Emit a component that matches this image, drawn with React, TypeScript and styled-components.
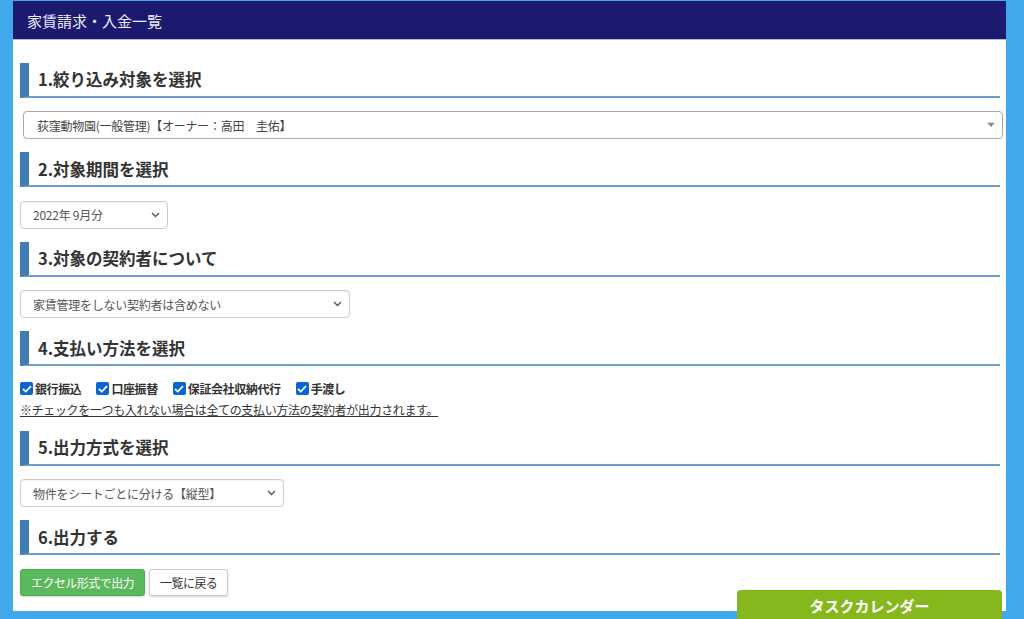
import styled, { createGlobalStyle } from "styled-components";

const GlobalStyle = createGlobalStyle`
  html, body {
    margin: 0;
    padding: 0;
    background: #3fa9ec;
    height: 100%;
    overflow: hidden;
  }
  body {
    font-family: "Noto Sans CJK JP", "Noto Sans", "Liberation Sans", sans-serif;
    color: #333;
  }
`;

const Page = styled.div`
  padding-top: 1px;
  padding-left: 13px;
  height: 619px;
  box-sizing: border-box;
`;

const Panel = styled.div`
  width: 993px;
  height: 610px;
  background: #fff;
  box-sizing: border-box;
`;

const Header = styled.div`
  height: 39px;
  background: #1b1a6e;
  display: flex;
  align-items: center;
  padding-left: 14px;
  color: #eceaf6;
  font-size: 15px;
  border-bottom: 1px solid #b9b8d8;
  box-sizing: border-box;
`;

const Body = styled.div`
  padding: 22.5px 6px 0 7px;
`;

const Section = styled.section`
  padding-bottom: 13px;
`;

const Heading = styled.h2`
  margin: 0;
  height: 35px;
  box-sizing: border-box;
  border-left: 9px solid #3f7db3;
  border-bottom: 2px solid #6f9ec9;
  padding-left: 9px;
  display: flex;
  align-items: center;
  font-size: 16.5px;
  font-weight: 700;
  color: #333;
`;

const Content = styled.div<{ $inset?: number }>`
  margin-top: 13.5px;
  padding-left: ${(p) => p.$inset ?? 0}px;
  margin-right: ${(p) => -(p.$inset ?? 0)}px;
`;

const SelectWrap = styled.div<{ $width: number | string }>`
  position: relative;
  width: ${(p) => (typeof p.$width === "number" ? `${p.$width}px` : p.$width)};
`;

const Select = styled.select<{ $plain?: boolean }>`
  appearance: none;
  width: 100%;
  height: 28px;
  box-sizing: border-box;
  border: 1px solid ${(p) => (p.$plain ? "#aaa" : "#ccc")};
  border-radius: 4px;
  background: #fff;
  padding: 0 24px 0 ${(p) => (p.$plain ? 13 : 12)}px;
  font-family: inherit;
  font-size: 12px;
  letter-spacing: -0.25px;
  color: ${(p) => (p.$plain ? "#444" : "#555")};
  box-shadow: ${(p) => (p.$plain ? "none" : "inset 0 1px 1px rgba(0,0,0,0.05)")};
  outline: none;
`;

const Arrow = styled.span`
  position: absolute;
  right: 8px;
  top: 50%;
  transform: translateY(-50%);
  display: flex;
  pointer-events: none;
`;

const Chevron = () => (
  <Arrow>
    <svg width="9" height="6" viewBox="0 0 9 6">
      <path d="M1 1 L4.5 4.5 L8 1" fill="none" stroke="#555" strokeWidth="1.4" />
    </svg>
  </Arrow>
);

const Triangle = () => (
  <Arrow>
    <svg width="8" height="5" viewBox="0 0 8 5">
      <path d="M0 0 H8 L4 4.5 Z" fill="#888" />
    </svg>
  </Arrow>
);

const CheckRow = styled.div`
  display: flex;
  gap: 15px;
  height: 20px;
  align-items: center;
  margin-top: -1px;
`;

const CheckLabel = styled.label`
  display: flex;
  align-items: center;
  gap: 2px;
  font-size: 12px;
  letter-spacing: -0.4px;
  font-weight: 700;
  color: #333;
`;

const Box = styled.span`
  width: 13px;
  height: 13px;
  border-radius: 2px;
  background: #0b64d4;
  display: flex;
  align-items: center;
  justify-content: center;
`;

const Note = styled.div`
  font-size: 12px;
  letter-spacing: -0.35px;
  line-height: 22px;
  color: #333;
  text-decoration: underline;
  margin-bottom: -3px;
`;

const Buttons = styled.div`
  display: flex;
  gap: 4px;
`;

const Button = styled.button<{ $primary?: boolean }>`
  height: 27px;
  padding: 0 10px;
  border-radius: 3px;
  font-family: inherit;
  font-size: 12px;
  letter-spacing: -0.55px;
  cursor: pointer;
  border: 1px solid ${(p) => (p.$primary ? "#4cae4c" : "#ccc")};
  background: ${(p) => (p.$primary ? "#5cb85c" : "#fff")};
  color: ${(p) => (p.$primary ? "#fff" : "#333")};
  box-shadow: 0 1px 2px rgba(0, 0, 0, 0.18);
`;

const TaskTab = styled.div`
  position: fixed;
  left: 737px;
  bottom: 0;
  width: 265px;
  height: 29px;
  background: #86b81e;
  border-radius: 4px 4px 0 0;
  color: #fff;
  font-weight: 700;
  font-size: 15px;
  display: flex;
  justify-content: center;
  padding-top: 5px;
  box-sizing: border-box;
`;

const methods = ["銀行振込", "口座振替", "保証会社収納代行", "手渡し"];

const Check = ({ label }: { label: string }) => (
  <CheckLabel>
    <Box>
      <svg width="10" height="8" viewBox="0 0 10 8">
        <path d="M1 4 L3.8 6.6 L9 1.2" fill="none" stroke="#fff" strokeWidth="1.8" />
      </svg>
    </Box>
    {label}
  </CheckLabel>
);

export default function App() {
  return (
    <>
      <GlobalStyle />
      <Page>
        <Panel>
          <Header>家賃請求・入金一覧</Header>
          <Body>
            <Section>
              <Heading>1.絞り込み対象を選択</Heading>
              <Content $inset={3}>
                <SelectWrap $width="100%">
                  <Select $plain defaultValue="a">
                    <option value="a">荻窪動物園(一般管理)【オーナー：高田　圭佑】</option>
                  </Select>
                  <Triangle />
                </SelectWrap>
              </Content>
            </Section>
            <Section>
              <Heading>2.対象期間を選択</Heading>
              <Content>
                <SelectWrap $width={148}>
                  <Select defaultValue="a">
                    <option value="a">2022年 9月分</option>
                  </Select>
                  <Chevron />
                </SelectWrap>
              </Content>
            </Section>
            <Section>
              <Heading>3.対象の契約者について</Heading>
              <Content>
                <SelectWrap $width={330}>
                  <Select defaultValue="a">
                    <option value="a">家賃管理をしない契約者は含めない</option>
                  </Select>
                  <Chevron />
                </SelectWrap>
              </Content>
            </Section>
            <Section>
              <Heading>4.支払い方法を選択</Heading>
              <Content>
                <CheckRow>
                  {methods.map((m) => (
                    <Check key={m} label={m} />
                  ))}
                </CheckRow>
                <Note>※チェックを一つも入れない場合は全ての支払い方法の契約者が出力されます。</Note>
              </Content>
            </Section>
            <Section>
              <Heading>5.出力方式を選択</Heading>
              <Content>
                <SelectWrap $width={264}>
                  <Select defaultValue="a">
                    <option value="a">物件をシートごとに分ける【縦型】</option>
                  </Select>
                  <Chevron />
                </SelectWrap>
              </Content>
            </Section>
            <Section>
              <Heading>6.出力する</Heading>
              <Content>
                <Buttons>
                  <Button $primary>エクセル形式で出力</Button>
                  <Button>一覧に戻る</Button>
                </Buttons>
              </Content>
            </Section>
          </Body>
        </Panel>
      </Page>
      <TaskTab>タスクカレンダー</TaskTab>
    </>
  );
}
